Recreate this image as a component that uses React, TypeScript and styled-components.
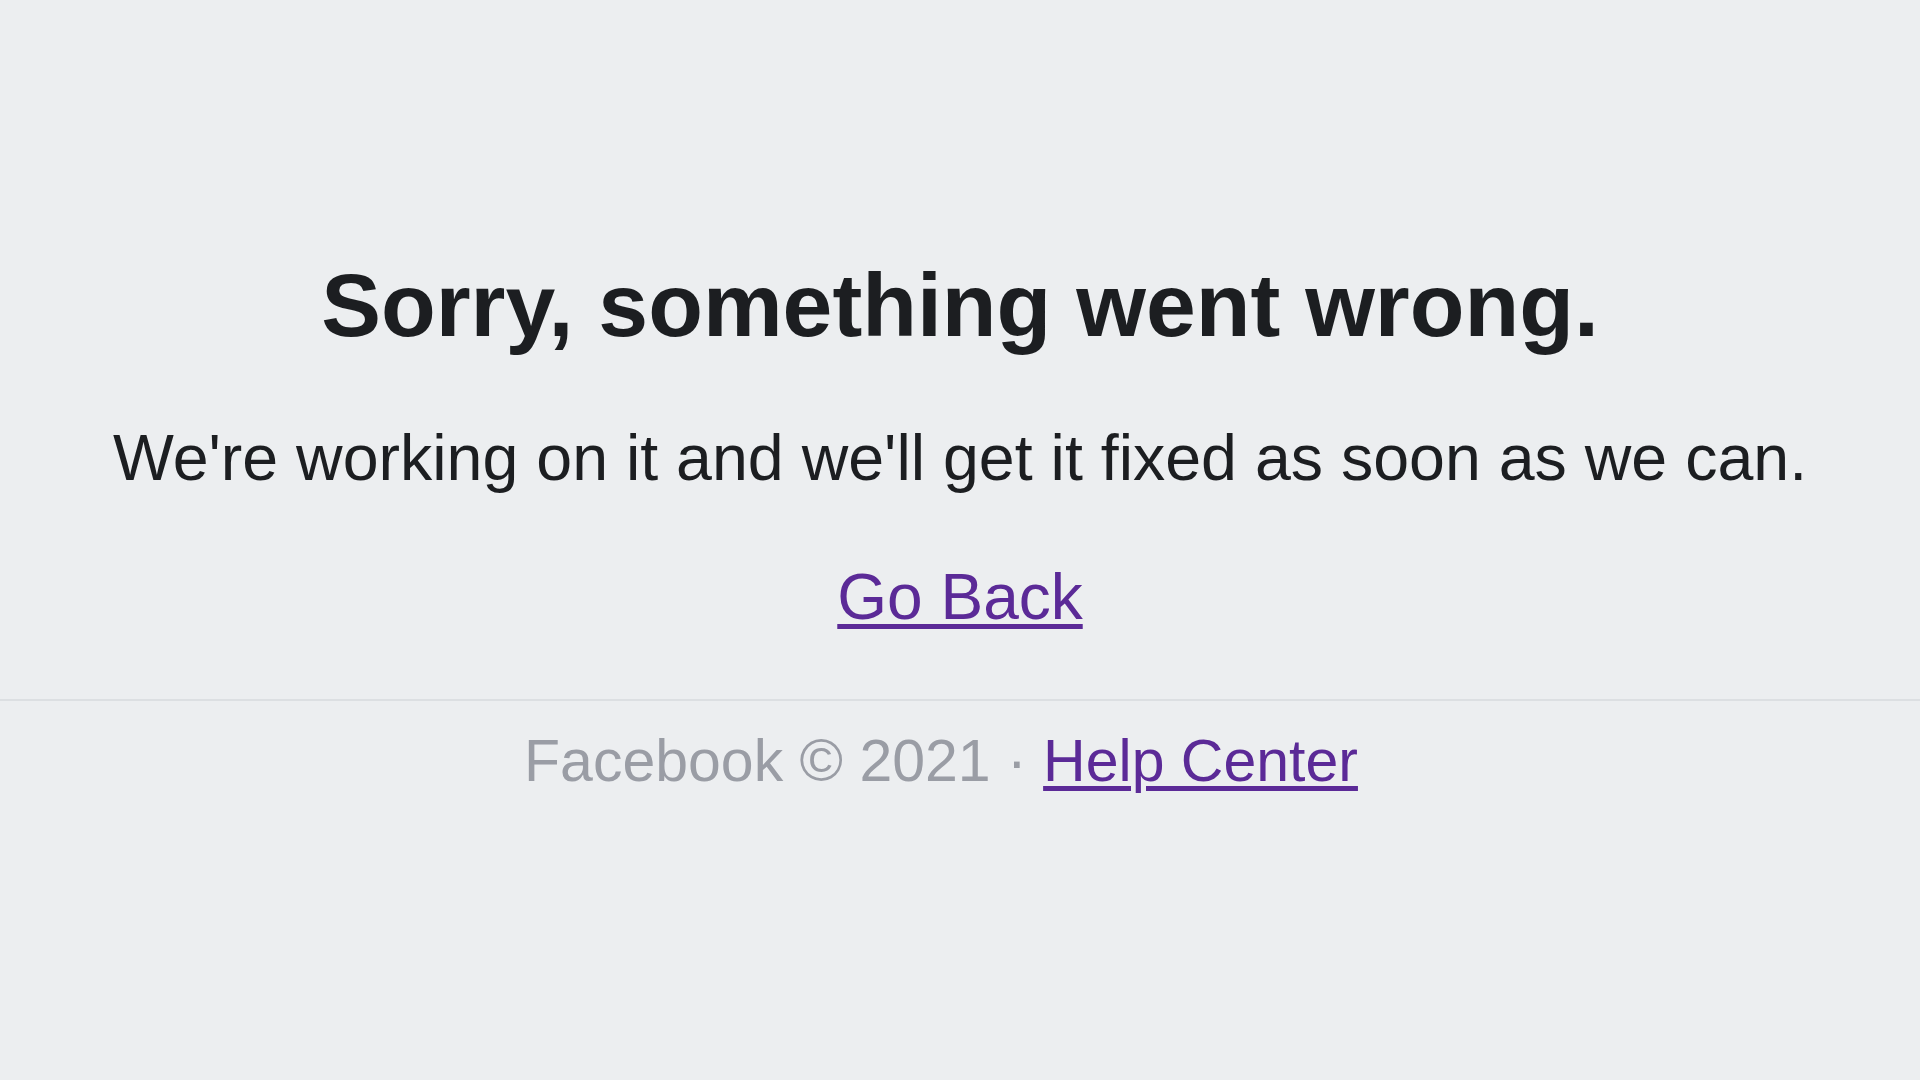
import React from "react";
import styled, { createGlobalStyle } from "styled-components";

const GlobalStyle = createGlobalStyle`
  html, body {
    margin: 0;
    padding: 0;
    background: #eceef0;
    font-family: "Liberation Sans", Arial, Helvetica, sans-serif;
  }
`;

const Page = styled.div`
  min-height: 100vh;
  background: #eceef0;
  display: flex;
  flex-direction: column;
`;

const Main = styled.main`
  display: flex;
  flex-direction: column;
  align-items: center;
  padding-top: 260px;
  text-align: center;
`;

const Title = styled.h1`
  margin: 0;
  font-size: 89.6px;
  line-height: 90px;
  font-weight: 700;
  color: #1c1e21;
`;

const Message = styled.p`
  margin: 76px 0 0;
  font-size: 64.5px;
  line-height: 64px;
  color: #1c1e21;
`;

const TextLink = styled.a<{ $size: number }>`
  font-size: ${(p) => p.$size}px;
  line-height: ${(p) => Math.round(p.$size)}px;
  color: #5b2a97;
  text-decoration: underline;
  text-decoration-thickness: 5px;
  text-underline-offset: 5px;
  cursor: pointer;
`;

const BackRow = styled.div`
  margin-top: 75px;
  display: flex;
  justify-content: center;
`;

const Divider = styled.hr`
  margin: 70px 0 0;
  border: none;
  height: 2px;
  background: #dcdfe2;
`;

const Footer = styled.footer`
  display: flex;
  justify-content: center;
  align-items: baseline;
  padding: 30px 38px 0 0;
  font-size: 59px;
  line-height: 60px;
  color: #9a9da5;
  white-space: pre;
`;

export default function App() {
  return (
    <Page>
      <GlobalStyle />
      <Main>
        <Title>Sorry, something went wrong.</Title>
        <Message>We're working on it and we'll get it fixed as soon as we can.</Message>
        <BackRow>
          <TextLink $size={64} href="#">
            Go Back
          </TextLink>
        </BackRow>
      </Main>
      <Divider />
      <Footer>
        <span>Facebook © 2021 · </span>
        <TextLink $size={59} href="#">
          Help Center
        </TextLink>
      </Footer>
    </Page>
  );
}
